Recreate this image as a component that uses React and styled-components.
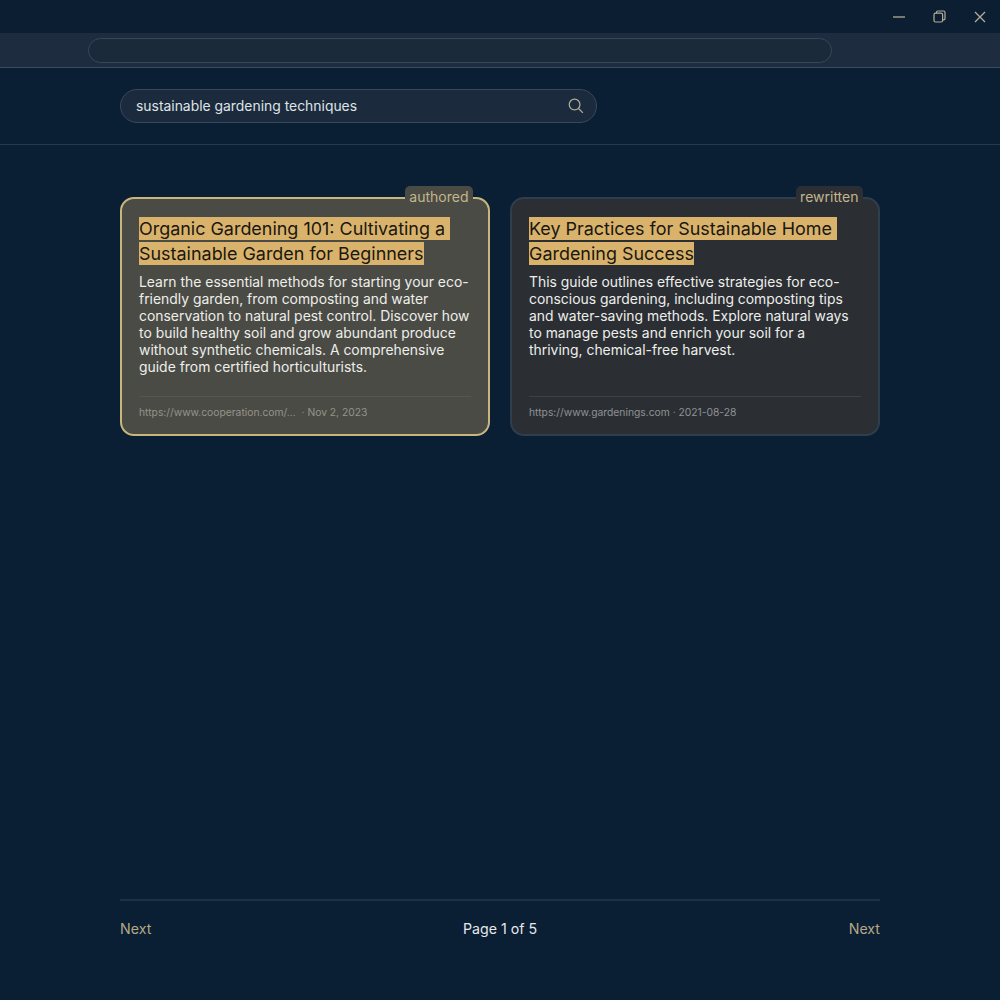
import styled, { createGlobalStyle } from "styled-components"

const GlobalStyle = createGlobalStyle`
    html, body {
        margin: 0;
        padding: 0;
        background: #0a1e34;
    }
    * {
        box-sizing: border-box;
    }
`

const Page = styled.div`
    width: 1000px;
    height: 1000px;
    display: flex;
    flex-direction: column;
    background: #0a1e34;
    font-family: Inter, "Liberation Sans", sans-serif;
    overflow: hidden;
`

const TitleBar = styled.div`
    height: 33px;
    display: flex;
    justify-content: flex-end;
    align-items: center;
    background: #0c1e32;
`

const WindowButton = styled.div`
    width: 40.5px;
    height: 33px;
    display: flex;
    align-items: center;
    justify-content: center;
    color: #b3ae97;
`

const AddressBar = styled.div`
    height: 35px;
    padding: 5px 168px 4px 88px;
    background: #1d2d3f;
    border-bottom: 1px solid #3a4b5d;
`

const AddressField = styled.div`
    height: 25px;
    border-radius: 13px;
    background: #1b2a3b;
    border: 1px solid #36475a;
`

const SearchRow = styled.div`
    height: 77px;
    padding: 21px 403px 0 120px;
    border-bottom: 1px solid #26384b;
`

const SearchField = styled.div`
    height: 34px;
    display: flex;
    align-items: center;
    justify-content: space-between;
    padding: 0 12px 0 15px;
    border-radius: 17px;
    background: #1b2b3d;
    border: 1px solid #37485a;
    color: #dfe3e6;
    font-size: 13.9px;
`

const SearchIcon = styled.svg`
    width: 16px;
    height: 16px;
    color: #b3ae97;
`

const Results = styled.main`
    flex: 1;
    padding: 52px 120px 0;
    display: grid;
    grid-template-columns: 370px 370px;
    gap: 20px;
    align-content: start;
`

const Card = styled.article`
    position: relative;
    height: 239px;
    padding: 17px 17px 0;
    display: flex;
    flex-direction: column;
    border-radius: 14px;
    background: ${(p) => (p.$selected ? "#4a4b45" : "#2b2f34")};
    border: ${(p) => (p.$selected ? "2px solid #c9b67f" : "2px solid #2f3e4c")};
`

const Badge = styled.span`
    position: absolute;
    top: -13px;
    right: 15px;
    height: 21px;
    padding: 0 4.5px;
    display: flex;
    align-items: center;
    border-radius: 5px 5px 0 0;
    background: ${(p) => (p.$selected ? "#4a4b45" : "#2b2f34")};
    color: #c4b58c;
    font-size: 14px;
`

const CardTitle = styled.h2`
    margin: 0;
    font-size: 17.95px;
    font-weight: 400;
    line-height: 25px;
    color: #1a1711;
`

const Highlight = styled.mark`
    background: #d9b36b;
    color: inherit;
    padding: 1px 0;
    box-decoration-break: clone;
    -webkit-box-decoration-break: clone;
`

const CardText = styled.p`
    margin: 8px 0 0;
    font-size: 13.92px;
    line-height: 17px;
    color: #eeeeea;
    white-space: nowrap;
`

const CardMeta = styled.div`
    margin-top: auto;
    padding-top: 8px;
    height: 38px;
    border-top: 1px solid ${(p) => (p.$selected ? "#55564f" : "#3c4248")};
    font-size: 10.3px;
    line-height: 14px;
    color: ${(p) => (p.$selected ? "#94948a" : "#8f9295")};
    white-space: nowrap;
`

const Pager = styled.footer`
    margin: 0 120px;
    height: 101px;
    padding-top: 19px;
    display: flex;
    justify-content: space-between;
    border-top: 2px solid #1d3044;
    font-size: 14.2px;
    line-height: 17px;
`

const PagerLink = styled.a`
    color: #b5a986;
`

const PagerLabel = styled.span`
    color: #e6e8ea;
`

const Lines = ({ items }) =>
    items.map((line, index) => (
        <span key={index}>
            {line}
            {index < items.length - 1 && <br />}
        </span>
    ))

const results = [
    {
        badge: "authored",
        selected: true,
        title: ["Organic Gardening 101: Cultivating a\u00a0", "Sustainable Garden for Beginners"],
        text: [
            "Learn the essential methods for starting your eco-",
            "friendly garden, from composting and water",
            "conservation to natural pest control. Discover how",
            "to build healthy soil and grow abundant produce",
            "without synthetic chemicals. A comprehensive",
            "guide from certified horticulturists.",
        ],
        meta: "https://www.cooperation.com/...\u00a0 · Nov 2, 2023",
    },
    {
        badge: "rewritten",
        selected: false,
        title: ["Key Practices for Sustainable Home\u00a0", "Gardening Success"],
        text: [
            "This guide outlines effective strategies for eco-",
            "conscious gardening, including composting tips",
            "and water-saving methods. Explore natural ways",
            "to manage pests and enrich your soil for a",
            "thriving, chemical-free harvest.",
        ],
        meta: "https://www.gardenings.com · 2021-08-28",
    },
]

export default function App() {
    return (
        <Page>
            <GlobalStyle />
            <TitleBar>
                <WindowButton>
                    <svg width="12" height="12" viewBox="0 0 12 12" fill="none" stroke="currentColor" strokeWidth="1.3">
                        <path d="M0 6h12" />
                    </svg>
                </WindowButton>
                <WindowButton>
                    <svg width="13" height="13" viewBox="0 0 13 13" fill="none" stroke="currentColor" strokeWidth="1.2">
                        <rect x="1" y="3.2" width="8.6" height="8.8" rx="1.5" />
                        <path d="M3.4 3.2V2.4A1.4 1.4 0 0 1 4.8 1h5.8A1.4 1.4 0 0 1 12 2.4v6a1.4 1.4 0 0 1-1.4 1.4h-1" />
                    </svg>
                </WindowButton>
                <WindowButton>
                    <svg width="12" height="12" viewBox="0 0 12 12" fill="none" stroke="currentColor" strokeWidth="1.3">
                        <path d="M1 1l10 10M11 1L1 11" />
                    </svg>
                </WindowButton>
            </TitleBar>
            <AddressBar>
                <AddressField />
            </AddressBar>
            <SearchRow>
                <SearchField>
                    sustainable gardening techniques
                    <SearchIcon viewBox="0 0 17 17" fill="none" stroke="currentColor" strokeWidth="1.3">
                        <circle cx="7" cy="7" r="5.7" />
                        <path d="M11.2 11.2l4.6 4.6" />
                    </SearchIcon>
                </SearchField>
            </SearchRow>
            <Results>
                {results.map((result) => (
                    <Card key={result.badge} $selected={result.selected}>
                        <Badge $selected={result.selected}>{result.badge}</Badge>
                        <CardTitle>
                            <Highlight>
                                <Lines items={result.title} />
                            </Highlight>
                        </CardTitle>
                        <CardText>
                            <Lines items={result.text} />
                        </CardText>
                        <CardMeta $selected={result.selected}>{result.meta}</CardMeta>
                    </Card>
                ))}
            </Results>
            <Pager>
                <PagerLink>Next</PagerLink>
                <PagerLabel>Page 1 of 5</PagerLabel>
                <PagerLink>Next</PagerLink>
            </Pager>
        </Page>
    )
}
